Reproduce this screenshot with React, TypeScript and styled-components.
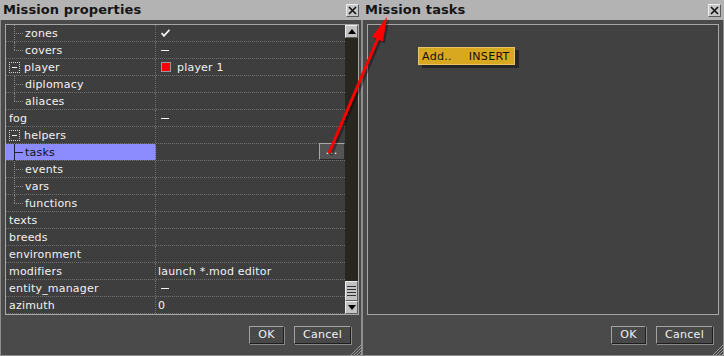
import React from 'react';
import styled, { createGlobalStyle } from 'styled-components';

const Global = createGlobalStyle`
  html, body { margin: 0; padding: 0; background: #2e2e2e; }
  body { width: 724px; height: 356px; overflow: hidden; font-family: "DejaVu Sans", "Liberation Sans", sans-serif; }
`;

const Screen = styled.div`
  position: relative;
  display: flex;
  width: 724px;
  height: 356px;
  background: #2e2e2e;
`;

const Window = styled.div`
  position: relative;
  display: flex;
  flex-direction: column;
  width: 362px;
  height: 356px;
`;

const TitleBar = styled.div`
  display: flex;
  align-items: center;
  justify-content: space-between;
  height: 20px;
  padding: 0 3px 0 3px;
  background: #b3b3b3;
  box-sizing: border-box;
`;

const Title = styled.span`
  font-family: "DejaVu Sans", sans-serif;
  font-weight: bold;
  font-size: 13px;
  color: #151515;
  line-height: 20px;
  letter-spacing: 0.1px;
`;

const CloseBtn = styled.div`
  width: 13px;
  height: 13px;
  box-sizing: border-box;
  background: #c6c6c6;
  border-top: 1px solid #eeeeee;
  border-left: 1px solid #eeeeee;
  border-bottom: 1px solid #5a5a5a;
  border-right: 1px solid #5a5a5a;
  display: flex;
  align-items: center;
  justify-content: center;
`;

const Body = styled.div`
  flex: 1;
  display: flex;
  flex-direction: column;
  background: #4a4a4a;
  border-left: 1px solid #8e8e8e;
  border-right: 1px solid #8e8e8e;
  border-bottom: 1px solid #8e8e8e;
  padding: 4px 2px 0 4px;
`;

const GridBox = styled.div`
  display: flex;
  height: 291px;
  box-sizing: border-box;
  border: 1px solid #a6a6a6;
  background: #3e3e3e;
`;

const Table = styled.div`
  flex: 1;
  display: flex;
  flex-direction: column;
`;

const Row = styled.div`
  display: flex;
  height: 17px;
  box-sizing: border-box;
  border-bottom: 1px dotted #6f6f6f;
  color: #f2f2f2;
  font-size: 11px;
  line-height: 16px;
  letter-spacing: 0.2px;
`;

const NameCell = styled.div<{ $selected?: boolean }>`
  position: relative;
  display: flex;
  align-items: center;
  width: 150px;
  padding: 1px 0 0 3px;
  box-sizing: border-box;
  background: ${p => (p.$selected ? '#8c8cff' : 'transparent')};
  color: ${p => (p.$selected ? '#101010' : '#f2f2f2')};
  border-right: 1px dotted #6f6f6f;
  white-space: nowrap;
`;

const ValueCell = styled.div`
  flex: 1;
  display: flex;
  align-items: center;
  padding: 1px 0 0 2px;
  white-space: nowrap;
`;

const Connector = styled.div<{ $last?: boolean; $solid?: boolean }>`
  position: relative;
  width: 16px;
  height: 16px;
  margin-top: -1px;
  flex: none;
  &::before {
    content: '';
    position: absolute;
    left: 5px;
    top: 0;
    height: ${p => (p.$last ? '8px' : '17px')};
    border-left: 1px ${p => (p.$solid ? 'solid #202040' : 'dotted #8a8a8a')};
  }
  &::after {
    content: '';
    position: absolute;
    left: 5px;
    top: 8px;
    width: 9px;
    border-top: 1px ${p => (p.$solid ? 'solid #202040' : 'dotted #8a8a8a')};
  }
`;

const ExpandBox = styled.div`
  position: relative;
  width: 11px;
  height: 11px;
  box-sizing: border-box;
  border: 1px dotted #d0d0d0;
  margin: -1px 4px 0 0;
  flex: none;
  &::after {
    content: '';
    position: absolute;
    left: 2px;
    top: 4px;
    width: 5px;
    border-top: 1px solid #f0f0f0;
  }
`;

const Dash = styled.span<{ $shift?: number }>`
  display: inline-block;
  width: 8px;
  height: 1px;
  margin-top: -1px;
  background: #f2f2f2;
  margin-left: ${p => p.$shift ?? 3}px;
`;

const Swatch = styled.span`
  display: inline-block;
  width: 10px;
  height: 10px;
  box-sizing: border-box;
  background: #ff0000;
  border: 1px solid #9a9a9a;
  margin: -1px 6px 0 3px;
`;

const DotsBtn = styled.div`
  margin-left: auto;
  width: 26px;
  height: 17px;
  margin-top: -2px;
  box-sizing: border-box;
  background: #545454;
  border-top: 1px solid #a8a8a8;
  border-left: 1px solid #a8a8a8;
  border-bottom: 1px solid #2a2a2a;
  border-right: 1px solid #2a2a2a;
  color: #ffffff;
  font-size: 10px;
  line-height: 14px;
  text-align: center;
  letter-spacing: 1px;
`;

const ScrollBar = styled.div`
  width: 13px;
  display: flex;
  flex-direction: column;
  background: #27261f;
`;

const ScrollBtn = styled.div`
  width: 13px;
  height: 13px;
  box-sizing: border-box;
  background: #c2c2c2;
  border-top: 1px solid #ececec;
  border-left: 1px solid #ececec;
  border-bottom: 1px solid #606060;
  border-right: 1px solid #606060;
  display: flex;
  align-items: center;
  justify-content: center;
`;

const Track = styled.div`
  flex: 1;
`;

const Thumb = styled.div`
  height: 20px;
  box-sizing: border-box;
  background: #c2c2c2;
  border-top: 1px solid #ececec;
  border-left: 1px solid #ececec;
  border-bottom: 1px solid #606060;
  border-right: 1px solid #606060;
  display: flex;
  flex-direction: column;
  justify-content: center;
  gap: 2px;
  padding: 0 1px;
`;

const ThumbLine = styled.div`
  height: 1px;
  background: #303030;
`;

const ButtonRow = styled.div`
  display: flex;
  justify-content: flex-end;
  gap: 10px;
  padding: 11px 8px 0 0;
`;

const Button = styled.div<{ $w: number }>`
  width: ${p => p.$w}px;
  height: 18px;
  box-sizing: border-box;
  background: #484848;
  border-top: 1px solid #a2a2a2;
  border-left: 1px solid #a2a2a2;
  border-bottom: 1px solid #1e1e1e;
  border-right: 1px solid #1e1e1e;
  box-shadow: 1px 1px 0 #8a8a8a;
  color: #f2f2f2;
  font-size: 11px;
  line-height: 16px;
  letter-spacing: 0.3px;
  text-align: center;
`;

const TaskArea = styled.div`
  position: relative;
  height: 291px;
  box-sizing: border-box;
  border: 1px solid #a6a6a6;
  background: #414141;
  margin-right: 2px;
`;

const PopupMenu = styled.div`
  position: absolute;
  left: 50px;
  top: 22px;
  width: 97px;
  height: 18px;
  box-sizing: border-box;
  display: flex;
  align-items: center;
  gap: 17px;
  padding: 1px 0 0 3px;
  background: #d9a821;
  border: 1px solid #e8c36a;
  box-shadow: 4px 3px 0 #262626;
  color: #101010;
  font-size: 11px;
  letter-spacing: 0.3px;
`;

const Grip = styled.svg`
  position: absolute;
  right: 0;
  bottom: 0;
`;

const ArrowLayer = styled.svg`
  position: absolute;
  left: 0;
  top: 0;
  pointer-events: none;
`;

const CloseX = () => (
  <svg width="9" height="9" viewBox="0 0 9 9">
    <path d="M1 1 L8 8 M8 1 L1 8" stroke="#101010" strokeWidth="1.6" />
  </svg>
);

const Check = () => (
  <svg width="9" height="8" viewBox="0 0 9 8" style={{ marginLeft: 3, marginTop: -1 }}>
    <path d="M0.5 4 L3 6.8 L8.5 0.8" stroke="#f4f4f4" strokeWidth="1.8" fill="none" />
  </svg>
);

const ResizeGrip = () => (
  <Grip width="13" height="13" viewBox="0 0 13 13">
    {[3, 6, 9, 12].map(o => (
      <path key={o} d={`M${13 - o} 13 L13 ${13 - o}`} stroke="#9a9a9a" strokeWidth="1" />
    ))}
  </Grip>
);

type RowDef = {
  name: string;
  child?: 'mid' | 'last';
  expand?: boolean;
  selected?: boolean;
  value?: React.ReactNode;
  button?: boolean;
};

const rows: RowDef[] = [
  { name: 'zones', child: 'mid', value: <Check /> },
  { name: 'covers', child: 'last', value: <Dash /> },
  { name: 'player', expand: true, value: <><Swatch />player 1</> },
  { name: 'diplomacy', child: 'mid' },
  { name: 'aliaces', child: 'last' },
  { name: 'fog', value: <Dash /> },
  { name: 'helpers', expand: true },
  { name: 'tasks', child: 'mid', selected: true, button: true },
  { name: 'events', child: 'mid' },
  { name: 'vars', child: 'mid' },
  { name: 'functions', child: 'last' },
  { name: 'texts' },
  { name: 'breeds' },
  { name: 'environment' },
  { name: 'modifiers', value: 'launch *.mod editor' },
  { name: 'entity_manager', value: <Dash /> },
  { name: 'azimuth', value: '0' },
];

export default function App() {
  return (
    <>
      <Global />
      <Screen>
        <Window>
          <TitleBar>
            <Title>Mission properties</Title>
            <CloseBtn><CloseX /></CloseBtn>
          </TitleBar>
          <Body>
            <GridBox>
              <Table>
                {rows.map(r => (
                  <Row key={r.name}>
                    <NameCell $selected={r.selected}>
                      {r.child && <Connector $last={r.child === 'last'} $solid={r.selected} />}
                      {r.expand && <ExpandBox />}
                      {r.name}
                    </NameCell>
                    <ValueCell>
                      {r.value}
                      {r.button && <DotsBtn>...</DotsBtn>}
                    </ValueCell>
                  </Row>
                ))}
              </Table>
              <ScrollBar>
                <ScrollBtn>
                  <svg width="8" height="5" viewBox="0 0 8 5"><path d="M0 5 L4 0 L8 5 Z" fill="#000" /></svg>
                </ScrollBtn>
                <Track />
                <Thumb>
                  <ThumbLine /><ThumbLine /><ThumbLine /><ThumbLine />
                </Thumb>
                <ScrollBtn>
                  <svg width="8" height="5" viewBox="0 0 8 5"><path d="M0 0 L4 5 L8 0 Z" fill="#000" /></svg>
                </ScrollBtn>
              </ScrollBar>
            </GridBox>
            <ButtonRow>
              <Button $w={35}>OK</Button>
              <Button $w={57}>Cancel</Button>
            </ButtonRow>
          </Body>
          <ResizeGrip />
        </Window>
        <Window>
          <TitleBar>
            <Title>Mission tasks</Title>
            <CloseBtn><CloseX /></CloseBtn>
          </TitleBar>
          <Body>
            <TaskArea>
              <PopupMenu>
                <span>Add..</span>
                <span>INSERT</span>
              </PopupMenu>
            </TaskArea>
            <ButtonRow>
              <Button $w={35}>OK</Button>
              <Button $w={57}>Cancel</Button>
            </ButtonRow>
          </Body>
          <ResizeGrip />
        </Window>
        <ArrowLayer width="724" height="356" viewBox="0 0 724 356">
          <g opacity="0.35" transform="translate(2 2)">
            <line x1="329" y1="153" x2="379" y2="36" stroke="#000" strokeWidth="3" />
            <polygon points="387,17 383,41.5 372,36.7" fill="#000" />
          </g>
          <line x1="329" y1="153" x2="379" y2="36" stroke="#ff0000" strokeWidth="3" />
          <polygon points="387,17 383,41.5 372,36.7" fill="#ff0000" />
        </ArrowLayer>
      </Screen>
    </>
  );
}
